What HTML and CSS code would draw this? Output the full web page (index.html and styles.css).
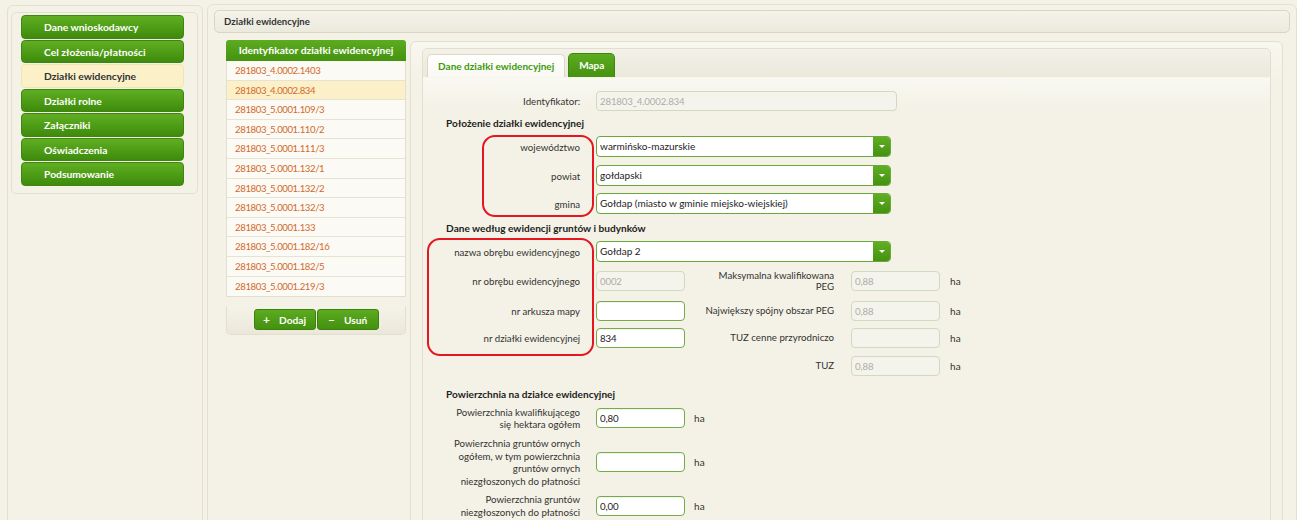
FILE: index.html
```html
<!DOCTYPE html>
<html lang="pl">
<head>
<meta charset="utf-8">
<title>Działki ewidencyjne</title>
<link rel="stylesheet" href="styles.css">
</head>
<body>
<div class="page">
  <aside class="sidebar">
    <nav class="nav">
      <a class="nav-item">Dane wnioskodawcy</a>
      <a class="nav-item">Cel złożenia/płatności</a>
      <a class="nav-item current">Działki ewidencyjne</a>
      <a class="nav-item">Działki rolne</a>
      <a class="nav-item">Załączniki</a>
      <a class="nav-item">Oświadczenia</a>
      <a class="nav-item">Podsumowanie</a>
    </nav>
  </aside>
  <main class="main">
    <div class="title-bar">Działki ewidencyjne</div>
    <div class="content">
      <section class="plots">
        <div class="plots-head">Identyfikator działki ewidencyjnej</div>
        <ul class="plots-list">
          <li>281803_4.0002.1403</li>
          <li class="selected">281803_4.0002.834</li>
          <li>281803_5.0001.109/3</li>
          <li>281803_5.0001.110/2</li>
          <li>281803_5.0001.111/3</li>
          <li>281803_5.0001.132/1</li>
          <li>281803_5.0001.132/2</li>
          <li>281803_5.0001.132/3</li>
          <li>281803_5.0001.133</li>
          <li>281803_5.0001.182/16</li>
          <li>281803_5.0001.182/5</li>
          <li>281803_5.0001.219/3</li>
        </ul>
        <div class="plots-actions">
          <button class="btn"><span class="ico">+</span>Dodaj</button>
          <button class="btn"><span class="ico">–</span>Usuń</button>
        </div>
      </section>
      <section class="detail">
        <div class="tabs-box">
          <div class="tabs">
            <div class="tab active">Dane działki ewidencyjnej</div>
            <div class="tab">Mapa</div>
          </div>
          <div class="form">
            <div class="row r-ident">
              <label class="lbl">Identyfikator:</label>
              <div class="input disabled wide">281803_4.0002.834</div>
            </div>
            <div class="heading h-1">Położenie działki ewidencyjnej</div>
            <div class="row r-sel1">
              <label class="lbl">województwo</label>
              <div class="select"><span class="sel-text">warmińsko-mazurskie</span><span class="sel-btn"></span></div>
            </div>
            <div class="row r-sel2">
              <label class="lbl">powiat</label>
              <div class="select"><span class="sel-text">gołdapski</span><span class="sel-btn"></span></div>
            </div>
            <div class="row r-sel3">
              <label class="lbl">gmina</label>
              <div class="select"><span class="sel-text">Gołdap (miasto w gminie miejsko-wiejskiej)</span><span class="sel-btn"></span></div>
            </div>
            <div class="heading h-2">Dane według ewidencji gruntów i budynków</div>
            <div class="row r-sel4">
              <label class="lbl">nazwa obrębu ewidencyjnego</label>
              <div class="select"><span class="sel-text">Gołdap 2</span><span class="sel-btn"></span></div>
            </div>
            <div class="row r-p1">
              <label class="lbl">nr obrębu ewidencyjnego</label>
              <div class="input disabled">0002</div>
              <label class="lbl2">Maksymalna kwalifikowana<br>PEG</label>
              <div class="input disabled">0,88</div>
              <span class="unit">ha</span>
            </div>
            <div class="row r-p2">
              <label class="lbl">nr arkusza mapy</label>
              <div class="input"></div>
              <label class="lbl2">Największy spójny obszar PEG</label>
              <div class="input disabled">0,88</div>
              <span class="unit">ha</span>
            </div>
            <div class="row r-p3">
              <label class="lbl">nr działki ewidencyjnej</label>
              <div class="input">834</div>
              <label class="lbl2">TUZ cenne przyrodniczo</label>
              <div class="input disabled"></div>
              <span class="unit">ha</span>
            </div>
            <div class="row r-p4">
              <span class="spacer"></span>
              <label class="lbl2">TUZ</label>
              <div class="input disabled">0,88</div>
              <span class="unit">ha</span>
            </div>
            <div class="heading h-3">Powierzchnia na działce ewidencyjnej</div>
            <div class="row r-a1">
              <label class="lbl multi">Powierzchnia kwalifikującego<br>się hektara ogółem</label>
              <div class="input">0,80</div>
              <span class="unit u-left">ha</span>
            </div>
            <div class="row r-a2">
              <label class="lbl multi">Powierzchnia gruntów ornych<br>ogółem, w tym powierzchnia<br>gruntów ornych<br>niezgłoszonych do płatności</label>
              <div class="input"></div>
              <span class="unit u-left">ha</span>
            </div>
            <div class="row r-a3">
              <label class="lbl multi">Powierzchnia gruntów<br>niezgłoszonych do płatności</label>
              <div class="input">0,00</div>
              <span class="unit u-left">ha</span>
            </div>
          </div>
        </div>
      </section>
    </div>
  </main>
</div>
<div class="mark mark-1"></div>
<div class="mark mark-2"></div>
</body>
</html>
```

FILE: styles.css
```css
html, body {
  margin: 0;
  height: 100%;
  overflow: hidden;
  background: #f4f2e6;
  font-family: Lato, "Open Sans", "DejaVu Sans", sans-serif;
  font-size: 9.7px;
  color: #333;
}

.page {
  display: flex;
  align-items: flex-start;
  gap: 4px;
  padding: 4px 0 0 7px;
}

/* ---------- sidebar ---------- */
.sidebar {
  box-sizing: border-box;
  width: 197px;
  height: 560px;
  margin-top: 1px;
  padding: 6px 4px 0 3px;
  border: 1px solid #e3e0cf;
  border-radius: 6px 6px 0 0;
}

.nav {
  display: flex;
  flex-direction: column;
  padding: 2px 13px 6px 9px;
  border: 1px solid #e3e0cf;
  border-radius: 5px;
}

.nav-item {
  box-sizing: border-box;
  height: 23.5px;
  margin-bottom: 1px;
  padding-left: 22px;
  line-height: 22px;
  font-size: 10.3px;
  font-weight: bold;
  color: #fff;
  border: 1px solid #3f860e;
  border-radius: 4px;
  background: linear-gradient(#5fae22, #4b9a14 60%, #3f8a0c);
}

.nav-item.current {
  color: #333;
  background: #fcf0c8;
  border-color: #f1e4b4;
}

/* ---------- main ---------- */
.main {
  box-sizing: border-box;
  width: 1095px;
  height: 600px;
  padding: 5px 6px 0 6px;
  border: 1px solid #e3e0cf;
  border-radius: 6px 6px 0 0;
}

.title-bar {
  box-sizing: border-box;
  height: 23px;
  padding-left: 9px;
  line-height: 21px;
  font-size: 9.6px;
  font-weight: bold;
  color: #333;
  border: 1px solid #d9d5c3;
  border-radius: 5px;
  background: linear-gradient(#f5f3ea, #ece9dd);
}

.content {
  display: flex;
  align-items: flex-start;
  gap: 4px;
  margin: 7px 0 0 12px;
}

/* ---------- list of plots ---------- */
.plots {
  width: 180px;
  flex: none;
}

.plots-head {
  height: 21px;
  line-height: 21px;
  text-align: center;
  font-size: 10.3px;
  font-weight: bold;
  color: #fff;
  border-radius: 3px 3px 0 0;
  background: linear-gradient(#5cab20, #45930f);
}

.plots-list {
  list-style: none;
  margin: 0;
  padding: 0;
  border: 1px solid #e2dfce;
  border-top: none;
}

.plots-list li {
  box-sizing: border-box;
  height: 19.6px;
  padding-left: 8px;
  line-height: 19px;
  font-size: 9.6px;
  letter-spacing: -0.4px;
  color: #d4692c;
  background: #fbfaf4;
  border-bottom: 1px solid #e6e3d5;
}

.plots-list li:last-child {
  border-bottom: none;
}

.plots-list li.selected {
  background: #fcf0c8;
}

.plots-actions {
  display: flex;
  justify-content: center;
  gap: 1px;
  box-sizing: border-box;
  height: 29px;
  margin-top: 9px;
  padding-top: 3px;
  border: 1px solid #e2dfce;
  border-top: none;
  border-radius: 0 0 5px 5px;
  background: linear-gradient(#f5f3e8, #ebe8db);
}

.btn {
  box-sizing: border-box;
  width: 62px;
  height: 21px;
  padding: 0;
  font-family: inherit;
  font-size: 10.2px;
  font-weight: bold;
  color: #fff;
  border: 1px solid #3d8010;
  border-radius: 3px;
  background: linear-gradient(#5cab20, #43910e);
}

.btn .ico {
  display: inline-block;
  margin-right: 9px;
  font-size: 12px;
}

/* ---------- detail ---------- */
.detail {
  box-sizing: border-box;
  width: 873px;
  height: 600px;
  margin-top: 1px;
  padding: 6px 11px 0 11px;
  border: 1px solid #e3e0cf;
  border-radius: 6px 6px 0 0;
  background: linear-gradient(#f8f7f0, #f4f2e6 40px);
  flex: none;
}

.tabs-box {
  height: 700px;
  border: 1px solid #e2dfce;
  border-radius: 5px 5px 0 0;
  background: linear-gradient(#f4f2e6 28px, #f9f8f2 29px, #f4f2e6 60px);
}

.tabs {
  display: flex;
  align-items: flex-end;
  gap: 3px;
  height: 28px;
  padding-left: 4px;
  border-radius: 4px 4px 0 0;
  background: linear-gradient(#f3f1e8, #ebe8dc);
}

.tab {
  box-sizing: border-box;
  height: 24px;
  padding: 0 10px;
  line-height: 23px;
  font-size: 10px;
  font-weight: bold;
  color: #fff;
  border: 1px solid #3f860e;
  border-bottom: none;
  border-radius: 5px 5px 0 0;
  background: linear-gradient(#5cab20, #45930f);
}

.tab.active {
  height: 23px;
  padding: 0 10px;
  color: #3f9a0c;
  border-color: #dcd8c5;
  background: linear-gradient(#ffffff, #f9f8f2);
}

/* ---------- form ---------- */
.form {
  display: flex;
  flex-direction: column;
  padding: 14px 0 0 23px;
}

.row {
  display: flex;
  align-items: center;
}

.lbl {
  box-sizing: border-box;
  width: 134px;
  margin-right: 16px;
  text-align: right;
  white-space: nowrap;
  color: #333;
}

.lbl.multi {
  line-height: 12.5px;
}

.lbl2 {
  width: 149px;
  margin-right: 17px;
  text-align: right;
  line-height: 11.5px;
  white-space: nowrap;
  color: #333;
}

.spacer {
  width: 239px;
}

.heading {
  height: 14px;
  line-height: 14px;
  font-size: 10.1px;
  font-weight: bold;
  color: #222;
}

.input {
  box-sizing: border-box;
  width: 89px;
  height: 20px;
  padding: 0 3px;
  line-height: 18px;
  letter-spacing: -0.2px;
  color: #222;
  background: #fff;
  border: 1px solid #77ab47;
  border-radius: 4px;
  box-shadow: inset 0 1px 1px rgba(0, 0, 0, 0.06);
}

.input.disabled {
  color: #aeaea6;
  background: #f5f4ec;
  border-color: #d0dac0;
  box-shadow: none;
}

.input.wide {
  width: 301px;
}

.select {
  box-sizing: border-box;
  display: flex;
  width: 295px;
  height: 21px;
  background: #fff;
  border: 1px solid #6ba73a;
  border-radius: 4px;
  overflow: hidden;
}

.sel-text {
  flex: 1;
  padding-left: 3px;
  line-height: 19px;
  font-size: 10px;
  color: #222;
}

.sel-btn {
  position: relative;
  width: 17px;
  background: linear-gradient(#5fae23, #44920f);
}

.sel-btn::after {
  content: "";
  position: absolute;
  left: 6px;
  top: 8px;
  border-left: 3px solid transparent;
  border-right: 3px solid transparent;
  border-top: 3px solid #fff;
}

.unit {
  margin-left: 10px;
  font-size: 10px;
  color: #333;
}

.unit.u-left {
  margin-left: 9px;
}

/* vertical rhythm */
.r-ident { height: 20px; }
.h-1 { margin-top: 5px; }
.r-sel1 { margin-top: 6px; }
.r-sel2 { margin-top: 8px; }
.r-sel3 { margin-top: 7px; }
.h-2 { margin-top: 7px; }
.r-sel4 { margin-top: 6px; }
.r-p1 { margin-top: 9px; height: 20px; }
.r-p2 { margin-top: 10px; height: 20px; }
.r-p3 { margin-top: 7px; height: 20px; }
.r-p4 { margin-top: 8px; height: 20px; }
.h-3 { margin-top: 11px; }
.r-a1 { margin-top: 5px; height: 24px; }
.r-a2 { margin-top: 7px; height: 50px; }
.r-a3 { margin-top: 6px; height: 25px; }

/* ---------- annotation marks ---------- */
.mark {
  position: absolute;
  box-sizing: border-box;
  border: 2.5px solid #e5161f;
  border-radius: 13px;
}

.mark-1 {
  left: 482px;
  top: 135px;
  width: 112px;
  height: 82px;
}

.mark-2 {
  left: 427px;
  top: 238px;
  width: 167px;
  height: 118px;
}
```
